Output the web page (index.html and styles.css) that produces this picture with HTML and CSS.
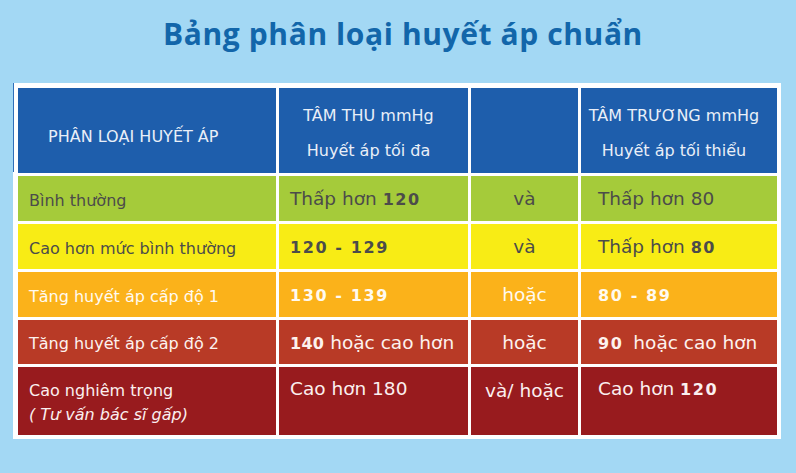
FILE: index.html
```html
<!DOCTYPE html>
<html lang="vi">
<head>
<meta charset="utf-8">
<title>Bảng phân loại huyết áp chuẩn</title>
<link rel="stylesheet" href="styles.css">
</head>
<body>
<h1 class="title">Bảng phân loại huyết áp chuẩn</h1>
<div class="panel">
  <div class="grid">
    <div class="cell head head-first"><span>PHÂN LOẠI HUYẾT ÁP</span></div>
    <div class="cell head head-two"><span>TÂM THU mmHg</span><span>Huyết áp tối đa</span></div>
    <div class="cell head"></div>
    <div class="cell head head-two"><span>TÂM TRƯƠNG mmHg</span><span>Huyết áp tối thiểu</span></div>

    <div class="cell green c1"><span>Bình thường</span></div>
    <div class="cell green c2"><span>Thấp hơn <b class="num">120</b></span></div>
    <div class="cell green c3"><span>và</span></div>
    <div class="cell green c4"><span>Thấp hơn 80</span></div>

    <div class="cell yellow c1"><span>Cao hơn mức bình thường</span></div>
    <div class="cell yellow c2"><span><b class="num">120 - 129</b></span></div>
    <div class="cell yellow c3"><span>và</span></div>
    <div class="cell yellow c4"><span>Thấp hơn <b class="num">80</b></span></div>

    <div class="cell orange c1"><span>Tăng huyết áp cấp độ 1</span></div>
    <div class="cell orange c2"><span><b class="num">130 - 139</b></span></div>
    <div class="cell orange c3"><span>hoặc</span></div>
    <div class="cell orange c4"><span><b class="num">80 - 89</b></span></div>

    <div class="cell red c1"><span>Tăng huyết áp cấp độ 2</span></div>
    <div class="cell red c2"><span><b class="num tight">140</b> hoặc cao hơn</span></div>
    <div class="cell red c3"><span>hoặc</span></div>
    <div class="cell red c4"><span><b class="num gap">90</b> hoặc cao hơn</span></div>

    <div class="cell dark c1 top"><span class="line">Cao nghiêm trọng</span><i class="line">( Tư vấn bác sĩ gấp)</i></div>
    <div class="cell dark c2 top"><span>Cao hơn 180</span></div>
    <div class="cell dark c3 top"><span>và/ hoặc</span></div>
    <div class="cell dark c4 top"><span>Cao hơn <b class="num">120</b></span></div>
  </div>
</div>
</body>
</html>
```
FILE: styles.css
```css
html, body {
  margin: 0;
  padding: 0;
}
body {
  width: 796px;
  height: 473px;
  background: #a3d8f4;
  font-family: "DejaVu Sans", "Liberation Sans", sans-serif;
  overflow: hidden;
}
.title {
  margin: 0 0 31px 0;
  padding: 16px 0 0 10px;
  height: 36px;
  line-height: 36px;
  text-align: center;
  font-family: "Open Sans", "Liberation Sans", sans-serif;
  font-weight: 700;
  font-size: 30px;
  color: #1266aa;
  letter-spacing: 0.6px;
}
.panel {
  position: relative;
  margin-left: 13px;
  width: 759px;
  padding: 5px 4px 4px 5px;
  background: #ffffff;
}
.panel::before {
  content: "";
  position: absolute;
  left: 0;
  top: 0;
  width: 1px;
  height: 89px;
  background: #2f6fb8;
}
.grid {
  display: grid;
  grid-template-columns: 258px 189px 107px 196px;
  grid-template-rows: 85px 45px 45px 45px 44px 68px;
  gap: 3px;
}
.cell {
  display: flex;
  align-items: center;
  font-size: 18.5px;
  white-space: pre;
  box-sizing: border-box;
}
.head {
  background: #1e5eac;
  color: #e9eff8;
  font-size: 16px;
}
.head-first {
  padding: 12px 0 0 30px;
}
.head-two {
  flex-direction: column;
  justify-content: center;
  align-items: center;
  line-height: 35px;
  padding: 5px 10px 0 0;
}
.green { background: #a5cb3a; color: #4c4c4a; }
.yellow { background: #f8ec15; color: #4c4c4a; }
.orange { background: #fbb21a; color: #fffaf0; }
.red { background: #b83a26; color: #fdf2ee; }
.dark { background: #981b1e; color: #fbefef; }
.c1 { padding-left: 11px; padding-top: 3px; font-size: 16px; }
.c2 { padding-left: 11px; }
.c3 { justify-content: center; }
.c4 { padding-left: 17px; }
.top {
  display: block;
  padding-top: 10px;
  line-height: 24px;
}
.c1.top { padding-top: 12px; }
.c3.top { text-align: center; padding-top: 12px; }
.line { display: block; }
i.line { font-style: italic; }
.num {
  font-weight: 700;
  font-size: 16px;
  letter-spacing: 1.6px;
}
.tight { letter-spacing: 0.3px; }
.gap { margin-right: 4px; }
```
